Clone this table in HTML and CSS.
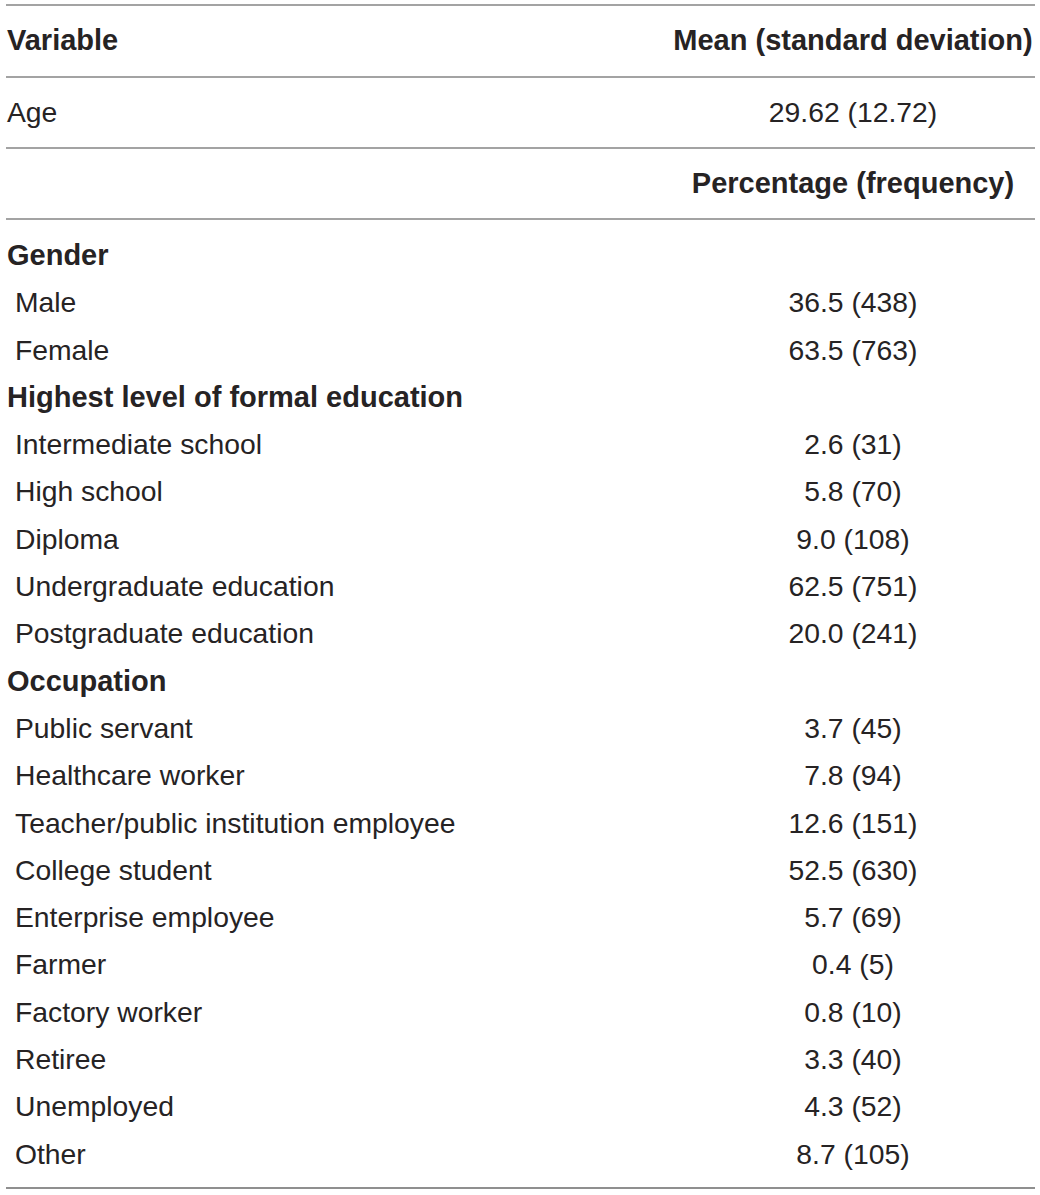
FILE: index.html
```html
<!DOCTYPE html>
<html>
<head>
<meta charset="utf-8">
<link rel="stylesheet" href="styles.css">
</head>
<body>
<table class="stats">
  <colgroup><col class="c-label"><col class="c-value"></colgroup>
  <tr class="head top ruled">
    <th class="label">Variable</th>
    <th class="value">Mean (standard deviation)</th>
  </tr>
  <tr class="head ruled">
    <td class="label">Age</td>
    <td class="value">29.62 (12.72)</td>
  </tr>
  <tr class="head ruled">
    <td class="label"></td>
    <th class="value">Percentage (frequency)</th>
  </tr>
  <tr class="ruled first">
    <th class="label">Gender</th><td class="value"></td>
  </tr>
  <tr><td class="label sub">Male</td><td class="value">36.5 (438)</td></tr>
  <tr><td class="label sub">Female</td><td class="value">63.5 (763)</td></tr>
  <tr><th class="label">Highest level of formal education</th><td class="value"></td></tr>
  <tr><td class="label sub">Intermediate school</td><td class="value">2.6 (31)</td></tr>
  <tr><td class="label sub">High school</td><td class="value">5.8 (70)</td></tr>
  <tr><td class="label sub">Diploma</td><td class="value">9.0 (108)</td></tr>
  <tr><td class="label sub">Undergraduate education</td><td class="value">62.5 (751)</td></tr>
  <tr><td class="label sub">Postgraduate education</td><td class="value">20.0 (241)</td></tr>
  <tr><th class="label">Occupation</th><td class="value"></td></tr>
  <tr><td class="label sub">Public servant</td><td class="value">3.7 (45)</td></tr>
  <tr><td class="label sub">Healthcare worker</td><td class="value">7.8 (94)</td></tr>
  <tr><td class="label sub">Teacher/public institution employee</td><td class="value">12.6 (151)</td></tr>
  <tr><td class="label sub">College student</td><td class="value">52.5 (630)</td></tr>
  <tr><td class="label sub">Enterprise employee</td><td class="value">5.7 (69)</td></tr>
  <tr><td class="label sub">Farmer</td><td class="value">0.4 (5)</td></tr>
  <tr><td class="label sub">Factory worker</td><td class="value">0.8 (10)</td></tr>
  <tr><td class="label sub">Retiree</td><td class="value">3.3 (40)</td></tr>
  <tr><td class="label sub">Unemployed</td><td class="value">4.3 (52)</td></tr>
  <tr class="last"><td class="label sub">Other</td><td class="value">8.7 (105)</td></tr>
</table>
</body>
</html>
```
FILE: styles.css
```css
html, body {
  margin: 0;
  padding: 0;
  background: #ffffff;
}
body {
  font-family: "Liberation Sans", Arial, sans-serif;
  color: #262324;
}
.stats {
  margin: 4px 0 0 6px;
  width: 1029px;
  border-collapse: collapse;
  table-layout: fixed;
}
.c-value { width: 364px; }
.stats th, .stats td {
  padding: 0;
  font-size: 28.3px;
  line-height: 47.3px;
  height: 47.3px;
  vertical-align: middle;
}
.stats th { font-weight: bold; font-size: 29px; }
.label { text-align: left; padding-left: 1px !important; white-space: nowrap; }
.label.sub { padding-left: 9px !important; font-weight: normal; }
.value { text-align: center; white-space: nowrap; }
.ruled th, .ruled td { border-top: 2px solid #a3a3a3; }
.head th, .head td { height: 69px; }
.head.top th, .head.top td { height: 70px; }
.first th, .first td { padding-top: 12px; }
.last td { padding-bottom: 9px; border-bottom: 2px solid #8f8f8f; }
```
